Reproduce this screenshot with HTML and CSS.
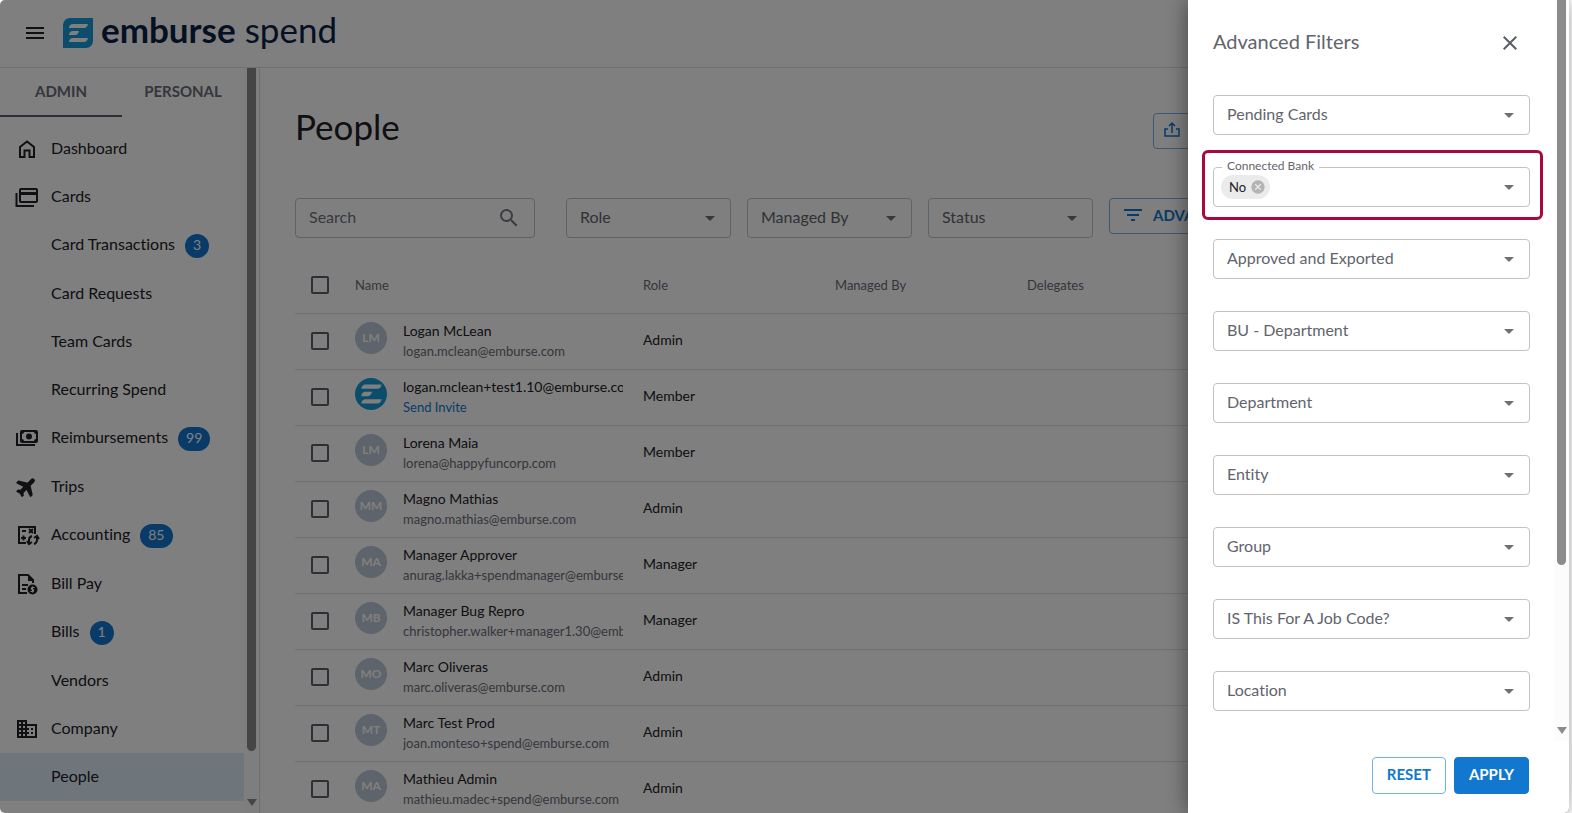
FILE: index.html
```html
<!DOCTYPE html>
<html lang="en">

<head>
    <meta charset="UTF-8">
    <meta name="viewport" content="width=device-width, initial-scale=1.0">
    <title>People - Emburse Spend</title>
    <link rel="stylesheet" href="styles.css">
</head>

<body>
    <svg class="symbols" aria-hidden="true">
        <symbol id="caret" viewBox="0 0 24 24"><path d="M7 10l5 5 5-5z" /></symbol>
        <symbol id="bars" viewBox="0 0 30 30">
            <path d="M9 6h16q-1 4-4 4H6q0-3 3-4zM9 13h7q-1 4-4 4H6q0-3 3-4zM9 20h16q-1 4-4 4H6q0-3 3-4z" />
        </symbol>
    </svg>

    <div class="app">
        <header class="topbar">
            <button class="icon-button menu-button" type="button" aria-label="Menu">
                <svg width="24" height="24" viewBox="0 0 24 24"><path d="M3 18h18v-2H3v2zm0-5h18v-2H3v2zm0-7v2h18V6H3z" /></svg>
            </button>
            <a class="logo" href="#">
                <svg class="logo-mark" width="30" height="30" viewBox="0 0 30 30">
                    <path class="mark-bg" d="M7 0h23v23a7 7 0 0 1-7 7H0V7a7 7 0 0 1 7-7z" />
                    <use class="mark-bars" href="#bars" />
                </svg>
                <span class="logo-text"><b>emburse</b> spend</span>
            </a>
        </header>

        <div class="columns">
            <aside class="sidebar">
                <div class="sidebar-content">
                    <div class="tabs">
                        <button class="tab active" type="button">ADMIN</button>
                        <button class="tab" type="button">PERSONAL</button>
                    </div>
                    <nav class="nav">
                        <a href="#"><svg viewBox="0 0 24 24"><path class="line" d="M5 10l7-5.500 7 5.500v10h-4.500v-6.500h-5v6.500H5z" /></svg>Dashboard</a>
                        <a href="#"><svg viewBox="0 0 24 24"><rect class="line" x="5" y="4" width="17" height="13" rx="1" /><path d="M5 7h17v3H5z" /><path class="line" d="M1.500 8v13H19" /></svg>Cards</a>
                        <a class="has-badge" href="#">Card Transactions <span class="badge">3</span></a>
                        <a href="#">Card Requests</a>
                        <a href="#">Team Cards</a>
                        <a href="#">Recurring Spend</a>
                        <a class="has-badge" href="#"><svg viewBox="0 0 24 24"><path fill-rule="evenodd" d="M7 4h14a2 2 0 0 1 2 2v9a2 2 0 0 1-2 2H7a2 2 0 0 1-2-2V6a2 2 0 0 1 2-2zM9 6a2 2 0 0 1-2 2v5a2 2 0 0 1 2 2h10a2 2 0 0 1 2-2V8a2 2 0 0 1-2-2z" /><circle cx="14" cy="10.500" r="3" /><path class="line" d="M2 7v12h18" /></svg>Reimbursements <span class="badge">99</span></a>
                        <a href="#"><svg viewBox="0 0 24 24"><path class="plane" transform="rotate(45 12 12)" d="M21 16v-2l-8-5V3.500a1.500 1.500 0 0 0-3 0V9l-8 5v2l8-2.500V19l-2 1.500V22l3.500-1 3.500 1v-1.500L13 19v-5.500l8 2.500z" /></svg>Trips</a>
                        <a class="has-badge" href="#"><svg viewBox="0 0 24 24"><path class="line" d="M11 20H4V4h16v7" /><path class="thin" d="M7 8h4M14 6l4 4M18 6l-4 4M6 15h5M8.500 12.500v5" /><path class="thin" d="M17 13q-3 1-3 4v3M12 18l2 3 3-2M19 21q3-1 3-4v-3M24 16l-2-3-3 2" /></svg>Accounting <span class="badge">85</span></a>
                        <a href="#"><svg viewBox="0 0 24 24"><path class="line" d="M12 21H4V3h9l5 5v3" /><path d="M13 3v6h6zM7 12h6v2H7zM7 16h4v2H7z" /><circle cx="17.500" cy="17.500" r="5" /><path class="dollar" d="M19.500 15.500h-3v2h2v2h-3M17.500 14.500v6" /></svg>Bill Pay</a>
                        <a class="has-badge" href="#">Bills <span class="badge">1</span></a>
                        <a href="#">Vendors</a>
                        <a href="#"><svg viewBox="0 0 24 24"><path d="M12 7V3H2v18h20V7H12zM6 19H4v-2h2v2zm0-4H4v-2h2v2zm0-4H4V9h2v2zm0-4H4V5h2v2zm4 12H8v-2h2v2zm0-4H8v-2h2v2zm0-4H8V9h2v2zm0-4H8V5h2v2zm10 12h-8v-2h2v-2h-2v-2h2v-2h-2V9h8v10zm-2-8h-2v2h2v-2zm0 4h-2v2h2v-2z" /></svg>Company</a>
                        <a class="current" href="#">People</a>
                    </nav>
                </div>
                <div class="scrollbar sidebar-scroll"><span class="thumb"></span><span class="arrow"></span></div>
            </aside>

            <main class="content">
                <div class="title-row">
                    <h1>People</h1>
                    <button class="outlined export" type="button">
                        <svg width="18" height="18" viewBox="0 0 18 18"><path class="export-line" d="M5 8H2v7h14V8h-3M9 12V3M6 5l3-3 3 3" /></svg>
                        EXPORT
                    </button>
                </div>
                <div class="toolbar">
                    <div class="search">
                        <input type="text" placeholder="Search" aria-label="Search">
                        <svg width="24" height="24" viewBox="0 0 24 24"><path d="M15.500 14h-.79l-.28-.27A6.470 6.470 0 0 0 16 9.500 6.500 6.500 0 1 0 9.500 16c1.610 0 3.090-.59 4.230-1.570l.27.28v.79l5 4.990L20.490 19l-4.990-5zm-6 0C7.010 14 5 11.990 5 9.500S7.010 5 9.500 5 14 7.010 14 9.500 11.990 14 9.500 14z" /></svg>
                    </div>
                    <div class="field"><select aria-label="Role"><option>Role</option></select><svg><use href="#caret" /></svg></div>
                    <div class="field"><select aria-label="Managed By"><option>Managed By</option></select><svg><use href="#caret" /></svg></div>
                    <div class="field"><select aria-label="Status"><option>Status</option></select><svg><use href="#caret" /></svg></div>
                    <button class="outlined advanced" type="button">
                        <svg width="24" height="24" viewBox="0 0 24 24"><path d="M10 18h4v-2h-4v2zM3 6v2h18V6H3zm3 7h12v-2H6v2z" /></svg>
                        ADVANCED
                    </button>
                </div>
                <table class="people">
                    <thead>
                        <tr>
                            <th class="check"><input type="checkbox" aria-label="Select all"></th>
                            <th class="name">Name</th>
                            <th class="col">Role</th>
                            <th class="col">Managed By</th>
                            <th>Delegates</th>
                        </tr>
                    </thead>
                    <tbody id="people-rows"></tbody>
                </table>
            </main>
        </div>
        <div class="backdrop"></div>
    </div>

    <aside class="drawer">
        <div class="drawer-scroll">
            <div class="drawer-body">
                <div class="drawer-head">
                    <h2>Advanced Filters</h2>
                    <button class="icon-button" type="button" aria-label="Close">
                        <svg width="24" height="24" viewBox="0 0 24 24"><path d="M19 6.410L17.590 5 12 10.590 6.410 5 5 6.410 10.590 12 5 17.590 6.410 19 12 13.410 17.590 19 19 17.590 13.410 12z" /></svg>
                    </button>
                </div>
                <div class="filters">
                    <div class="field"><select aria-label="Pending Cards"><option>Pending Cards</option></select><svg><use href="#caret" /></svg></div>
                    <div class="field selected">
                        <label for="connected-bank">Connected Bank</label>
                        <select id="connected-bank"><option></option><option>No</option></select>
                        <span class="chip">No
                            <button type="button" aria-label="Remove No"><svg width="16" height="16" viewBox="0 0 24 24"><path d="M12 2a10 10 0 1 0 0 20 10 10 0 0 0 0-20zm5 13.590L15.590 17 12 13.410 8.410 17 7 15.590 10.590 12 7 8.410 8.410 7 12 10.590 15.590 7 17 8.410 13.410 12z" /></svg></button>
                        </span>
                        <svg><use href="#caret" /></svg>
                    </div>
                    <div class="field"><select aria-label="Approved and Exported"><option>Approved and Exported</option></select><svg><use href="#caret" /></svg></div>
                    <div class="field"><select aria-label="BU - Department"><option>BU - Department</option></select><svg><use href="#caret" /></svg></div>
                    <div class="field"><select aria-label="Department"><option>Department</option></select><svg><use href="#caret" /></svg></div>
                    <div class="field"><select aria-label="Entity"><option>Entity</option></select><svg><use href="#caret" /></svg></div>
                    <div class="field"><select aria-label="Group"><option>Group</option></select><svg><use href="#caret" /></svg></div>
                    <div class="field"><select aria-label="Job code"><option>IS This For A Job Code?</option></select><svg><use href="#caret" /></svg></div>
                    <div class="field"><select aria-label="Location"><option>Location</option></select><svg><use href="#caret" /></svg></div>
                </div>
            </div>
            <div class="scrollbar drawer-bar"><span class="thumb"></span><span class="arrow"></span></div>
        </div>
        <div class="drawer-actions">
            <button class="outlined" type="button">RESET</button>
            <button class="primary" type="button">APPLY</button>
        </div>
    </aside>

    <script src="people.js"></script>
</body>

</html>
```

FILE: styles.css
```css
* {
    box-sizing: border-box;
}

body {
    margin: 0;
    height: 100vh;
    overflow: hidden;
    background-color: #fafafa;
    font-family: Lato, "Liberation Sans", sans-serif;
    font-size: 16px;
    font-variant-ligatures: none;
    color: #212126;
}

button,
input,
select {
    font-family: inherit;
    font-size: 16px;
    font-variant-ligatures: none;
}

button {
    cursor: pointer;
}

.symbols {
    display: none;
}

.app {
    position: relative;
    height: 100vh;
    margin-right: 3px;
    display: flex;
    flex-direction: column;
    background-color: #ffffff;
    border-radius: 5px;
    overflow: hidden;
}

.backdrop {
    position: absolute;
    inset: 0;
    background-color: rgba(0, 0, 0, 0.5);
}

/* Top bar */
.topbar {
    flex: none;
    height: 68px;
    display: flex;
    align-items: center;
    gap: 16px;
    padding: 0 23px 2px;
    border-bottom: 1px solid #dedede;
}

.icon-button {
    display: flex;
    padding: 0;
    border: none;
    background: none;
}

.menu-button {
    fill: #212126;
}

.logo {
    display: flex;
    align-items: center;
    gap: 8px;
    color: #0b2244;
    text-decoration: none;
}

.mark-bg,
.avatar.brand {
    fill: #169bd7;
    background-color: #169bd7;
}

.mark-bars {
    fill: #ffffff;
}

.logo-text {
    padding-bottom: 8px;
    font-size: 35px;
    line-height: 36px;
}

/* Sidebar */
.columns {
    flex: 1;
    min-height: 0;
    display: flex;
}

.sidebar {
    flex: none;
    width: 260px;
    display: flex;
    border-right: 1px solid #dedede;
}

.sidebar-content {
    flex: 1;
    overflow: hidden;
}

.tabs {
    display: flex;
    height: 49px;
}

.tab {
    flex: 1;
    padding: 0 0 2px;
    border: none;
    border-bottom: 2px solid transparent;
    background: none;
    color: #6b6c78;
    font-size: 15px;
    font-weight: bold;
}

.tab.active {
    border-color: #5f5f6e;
}

.nav {
    padding-top: 8px;
}

.nav a {
    height: 48px;
    display: flex;
    align-items: center;
    gap: 10px;
    padding: 0 0 4px 51px;
    color: inherit;
    text-decoration: none;
}

.nav a.has-badge {
    height: 49px;
}

.nav a.current {
    background-color: #dcecf9;
}

.nav svg {
    flex: none;
    width: 24px;
    height: 24px;
    margin: 3px 2px 0 -36px;
    fill: #212126;
    overflow: visible;
}

.line,
.thin,
.dollar,
.export-line {
    fill: none;
    stroke: #212126;
    stroke-width: 2;
}

.plane {
    stroke: #212126;
    stroke-width: 1.5;
    stroke-linejoin: round;
}

.dollar {
    stroke: #ffffff;
    stroke-width: 1;
}

.badge {
    min-width: 24px;
    height: 24px;
    margin-top: 4px;
    padding: 0 8px;
    border-radius: 12px;
    background-color: #1177cf;
    color: #ffffff;
    font-size: 14px;
    line-height: 22px;
    text-align: center;
}

/* Scrollbars */
.scrollbar {
    flex: none;
    width: 15px;
    display: flex;
    flex-direction: column;
    align-items: center;
    padding-bottom: 7px;
    background-color: #fcfcfc;
}

.scrollbar .thumb {
    width: 9px;
    border-radius: 0 0 5px 5px;
    background-color: #8b8b8b;
}

.scrollbar .arrow {
    margin-top: auto;
    border: 5px solid transparent;
    border-top: 7px solid #8b8b8b;
    border-bottom: none;
}

.sidebar-scroll .thumb {
    height: calc(100% - 55px);
}

/* Page content */
.content {
    flex: 1;
    min-width: 0;
    padding: 38px 35px 0;
}

.title-row {
    display: flex;
    justify-content: space-between;
}

h1 {
    margin: 0;
    font-size: 35px;
    line-height: 40px;
    font-weight: normal;
}

.outlined,
.primary {
    height: 37px;
    display: flex;
    align-items: center;
    justify-content: center;
    gap: 8px;
    padding: 0 14px 3px;
    border: 1px solid #73b2e8;
    border-radius: 4px;
    background: none;
    color: #1177cf;
    font-size: 15px;
    font-weight: bold;
    white-space: nowrap;
}

.outlined svg {
    flex: none;
    fill: currentColor;
}

.export,
.advanced {
    height: 36px;
    padding-left: 11px;
}

.export {
    width: 381px;
    margin-top: 7px;
    padding-left: 9px;
    justify-content: flex-start;
}

.export .export-line {
    stroke: #1177cf;
    stroke-width: 1.5;
}

.toolbar {
    display: flex;
    gap: 16px;
    margin-top: 49px;
}

.search {
    width: 240px;
    height: 40px;
    display: flex;
    align-items: center;
    margin-right: 15px;
    padding: 0 13px;
    border: 1px solid #c2c2c2;
    border-radius: 4px;
}

.search input {
    flex: 1;
    min-width: 0;
    padding: 0 0 3px;
    border: none;
    background: none;
    outline: none;
}

.search input::placeholder {
    color: #71727d;
}

.search svg {
    fill: #77777f;
}

.field {
    position: relative;
    flex: none;
    width: 165px;
    height: 40px;
}

.field select {
    width: 100%;
    height: 100%;
    padding: 0 13px 4px;
    border: 1px solid #c2c2c2;
    border-radius: 4px;
    appearance: none;
    background: none;
    color: #62646d;
}

/* Drop-down arrow laid over the select */
.field > svg {
    position: absolute;
    top: 8px;
    right: 9px;
    width: 24px;
    height: 24px;
    fill: #707070;
    pointer-events: none;
}

.people {
    width: 100%;
    margin-top: 19px;
    border-collapse: collapse;
    table-layout: fixed;
}

.people th,
.people td {
    height: 56px;
    padding: 0;
    border-bottom: 1px solid #e0e0e0;
    text-align: left;
    font-size: 14px;
    font-weight: normal;
}

.people th {
    color: #6b6c78;
    font-size: 13px;
}

.people .role {
    padding-bottom: 3px;
}

.people .check {
    width: 60px;
    padding-left: 16px;
}

.people .name {
    width: 288px;
}

.people .col {
    width: 192px;
}

.people input {
    display: block;
    width: 18px;
    height: 18px;
    margin: 0;
    border: 2px solid #5f5f6e;
    border-radius: 2px;
    appearance: none;
}

.person {
    width: 268px;
    height: 55px;
    display: flex;
    align-items: center;
    gap: 16px;
}

.avatar {
    flex: none;
    width: 32px;
    height: 32px;
    margin-bottom: 6px;
    border-radius: 50%;
    background-color: #bdc8d6;
    color: #ffffff;
    font-size: 12px;
    font-weight: bold;
    line-height: 32px;
    text-align: center;
}

.person-text {
    min-width: 0;
    overflow: hidden;
    white-space: nowrap;
    line-height: 20px;
}

.person-text small,
.person-text a {
    display: block;
    color: #6b6c78;
    font-size: 13px;
    text-decoration: none;
}

.person-text a {
    color: #1177cf;
}

/* Advanced filters drawer */
.drawer {
    position: absolute;
    top: 0;
    right: 3px;
    width: 381px;
    height: 100vh;
    display: flex;
    flex-direction: column;
    background-color: #ffffff;
    border-radius: 0 5px 5px 0;
    box-shadow: -2px 0 20px rgba(0, 0, 0, 0.4);
    color: #62646d;
}

.drawer-scroll {
    flex: 1;
    min-height: 0;
    display: flex;
}

.drawer-body {
    flex: 1;
    padding: 25px 24px 0 25px;
}

.drawer-head {
    height: 36px;
    display: flex;
    align-items: center;
    justify-content: space-between;
    padding-right: 8px;
}

.drawer-head svg {
    fill: #5c5e68;
}

h2 {
    margin: 0;
    padding-bottom: 4px;
    font-size: 20px;
    line-height: 32px;
    font-weight: normal;
}

.filters {
    display: flex;
    flex-direction: column;
    gap: 32px;
    margin-top: 34px;
}

.filters .field {
    width: 100%;
}

.selected label {
    position: absolute;
    top: -10px;
    left: 9px;
    padding: 0 5px;
    background-color: #ffffff;
    font-size: 12px;
    line-height: 18px;
}

/* Highlight frame round the field in use */
.selected::before {
    content: "";
    position: absolute;
    inset: -17px -13px -13px -11px;
    border: 3px solid #a6093d;
    border-radius: 6px;
    pointer-events: none;
}

.chip {
    position: absolute;
    top: 8px;
    left: 8px;
    height: 24px;
    display: flex;
    align-items: center;
    gap: 4px;
    padding: 0 4px 0 8px;
    border-radius: 12px;
    background-color: #ebebeb;
    color: #212126;
    font-size: 13px;
}

.chip button {
    display: flex;
    padding: 0;
    border: none;
    background: none;
}

.chip svg {
    fill: #b3b3b3;
}

.drawer-bar .thumb {
    height: 77%;
}

.drawer-actions {
    flex: none;
    display: flex;
    justify-content: flex-end;
    gap: 8px;
    padding: 16px 40px 19px;
}

.primary {
    border-color: #1177cf;
    background-color: #1177cf;
    color: #ffffff;
}
```

FILE: people.js
```js
const people = [
    ['LM', 'Logan McLean', 'logan.mclean@emburse.com', 'Admin'],
    ['', 'logan.mclean+test1.10@emburse.com', '', 'Member'],
    ['LM', 'Lorena Maia', 'lorena@happyfuncorp.com', 'Member'],
    ['MM', 'Magno Mathias', 'magno.mathias@emburse.com', 'Admin'],
    ['MA', 'Manager Approver', 'anurag.lakka+spendmanager@emburse.com', 'Manager'],
    ['MB', 'Manager Bug Repro', 'christopher.walker+manager1.30@emburse.com', 'Manager'],
    ['MO', 'Marc Oliveras', 'marc.oliveras@emburse.com', 'Admin'],
    ['MT', 'Marc Test Prod', 'joan.monteso+spend@emburse.com', 'Admin'],
    ['MA', 'Mathieu Admin', 'mathieu.madec+spend@emburse.com', 'Admin']
];

const rows = document.getElementById('people-rows');

people.forEach(([initials, name, email, role]) => {
    // People without initials have not accepted their invite yet
    const avatar = initials
        ? `<span class="avatar">${initials}</span>`
        : '<svg class="avatar brand" viewBox="0 0 30 30"><use class="mark-bars" href="#bars" /></svg>';
    const detail = email ? `<small>${email}</small>` : '<a href="#">Send Invite</a>';

    const row = document.createElement('tr');
    row.innerHTML = `
        <td class="check"><input type="checkbox" aria-label="Select ${name}"></td>
        <td><div class="person">${avatar}<div class="person-text">${name}${detail}</div></div></td>
        <td class="role">${role}</td>
        <td></td>
        <td></td>`;
    rows.appendChild(row);
});
```
